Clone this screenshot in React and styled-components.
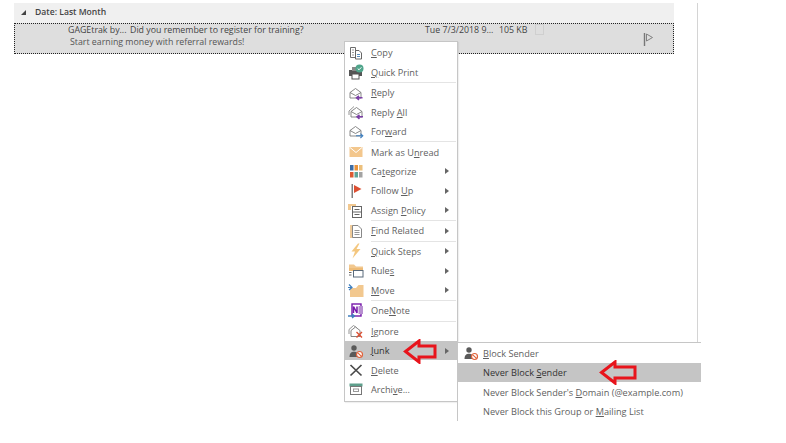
import React from "react";
import styled, { createGlobalStyle } from "styled-components";

const GlobalStyle = createGlobalStyle`
  html, body {
    margin: 0;
    padding: 0;
    background: #fff;
  }
  body {
    font-family: "Open Sans", "Noto Sans", "Liberation Sans", sans-serif;
  }
`;

const Page = styled.div`
  position: relative;
  width: 786px;
  height: 443px;
  overflow: hidden;
  background: #fff;
  display: flex;
  align-items: flex-start;
  padding: 3px 0 0 14px;
  box-sizing: border-box;
`;

const MailList = styled.div`
  width: 660px;
  flex: none;
`;

const ReadingDivider = styled.div`
  width: 1px;
  height: 339px;
  margin-left: 23px;
  background: #d4d4d4;
  flex: none;
`;

const GroupHeader = styled.div`
  height: 20px;
  box-sizing: border-box;
  background: #f0f0f0;
  display: flex;
  align-items: center;
  padding: 0 0 2px 7px;
  gap: 9px;
  font-size: 8.6px;
  font-weight: 600;
  color: #444;
`;

const Collapse = styled.span`
  width: 0;
  height: 0;
  border-style: solid;
  border-width: 0 0 5px 5px;
  border-color: transparent transparent #444 transparent;
`;

const MailRow = styled.div`
  height: 31px;
  box-sizing: border-box;
  background: #dedede;
  border: 1px dotted #222;
  display: flex;
  padding-left: 53px;
  font-size: 8.8px;
  color: #444;
`;

const MailText = styled.div`
  width: 576px;
  flex: none;
  display: flex;
  flex-direction: column;
  margin-top: -1px;
`;

const MailLine = styled.div`
  display: flex;
  align-items: center;
  height: 13px;
  white-space: nowrap;
`;

const Preview = styled.div`
  height: 12px;
  line-height: 12px;
  margin-left: 2px;
  white-space: nowrap;
  color: #555;
`;

const Cell = styled.span`
  width: ${(p) => p.$w}px;
  flex: none;
`;

const ReadBox = styled.span`
  width: 7px;
  height: 9px;
  border: 1px solid #cfcfcf;
  flex: none;
`;

const FlagSlot = styled.div`
  margin: 9px 0 0 -1px;
`;

const Menu = styled.div`
  position: absolute;
  left: 344px;
  top: 41px;
  width: 114px;
  height: 361px;
  box-sizing: border-box;
  background: #fff;
  border: 1px solid #c6c6c6;
  box-shadow: 1px 1px 1px rgba(0, 0, 0, 0.06);
  padding-top: 1px;
  font-size: 9.2px;
  color: #5f5f5f;
`;

const SubMenu = styled.div`
  position: absolute;
  left: 457px;
  top: 342px;
  width: 244px;
  height: 79px;
  box-sizing: border-box;
  background: #fff;
  border-top: 1px solid #c6c6c6;
  border-left: 1px solid #c6c6c6;
  padding-top: 0.6px;
  font-size: 9.2px;
  color: #5f5f5f;
`;

const Item = styled.div`
  position: relative;
  height: 19.4px;
  display: flex;
  align-items: center;
  white-space: nowrap;
  background: ${(p) => (p.$active ? "#c5c5c5" : "transparent")};
  color: ${(p) => (p.$active ? "#333" : "inherit")};
`;

const IconSlot = styled.span`
  width: 26px;
  height: 16px;
  flex: none;
  display: flex;
  justify-content: center;
  padding-right: 5px;
  box-sizing: border-box;
`;

const Label = styled.span`
  flex: 1;
`;

const Access = styled.span`
  text-decoration: underline;
  text-underline-offset: 1px;
`;

const SubArrow = styled.span`
  width: 0;
  height: 0;
  margin-right: 8px;
  border-style: solid;
  border-width: 3px 0 3px 4px;
  border-color: transparent transparent transparent #666;
`;

const Separator = styled.div`
  height: 1px;
  margin: 0.1px 1px 0.1px 26px;
  background: #e4e4e4;
`;

const SubSlot = styled.span`
  width: 25px;
  height: 16px;
  flex: none;
  display: flex;
  justify-content: center;
`;

const Pointer = styled.svg`
  position: absolute;
  left: ${(p) => p.$left}px;
  top: ${(p) => p.$top}px;
  display: block;
`;

const Ico = ({ children }) => (
  <svg width="16" height="16" viewBox="0 0 16 16" fill="none">
    {children}
  </svg>
);

const Envelope = ({ x = 0 }) => (
  <g stroke="#7a7a7a" strokeWidth="0.9">
    <path d={`M${2 + x} 7.5 L${7.5 + x} 3.5 L${13 + x} 7.5 V13 H${2 + x} Z`} fill="#fff" />
    <path d={`M${2 + x} 7.5 L${7.5 + x} 10.5 L${13 + x} 7.5`} />
  </g>
);

const NoSign = () => (
  <g>
    <circle cx="11.5" cy="11.5" r="3" fill="#fff" stroke="#e0623a" strokeWidth="1.2" />
    <path d="M9.5 9.7 L13.5 13.3" stroke="#e0623a" strokeWidth="1.1" />
  </g>
);

const PersonIcon = () => (
  <Ico>
    <circle cx="6" cy="5" r="2.7" fill="#5a5a5a" />
    <path d="M1.5 14 C1.5 10 3.5 8.7 6 8.7 C8.5 8.7 10.5 10 10.5 14 Z" fill="#5a5a5a" />
    <NoSign />
  </Ico>
);

const icons = {
  copy: (
    <Ico>
      <path d="M2.5 2.5 H7.5 V12.5 H2.5 Z" stroke="#6e6e6e" fill="#fff" />
      <path d="M7.5 5.5 H11 L13.5 8 V14 H7.5 Z" stroke="#666" fill="#fff" />
      <path d="M4 5 H6 M4 7.5 H6 M4 10 H6" stroke="#999" />
      <path d="M9 9.5 H12 M9 11.5 H12" stroke="#5a8fbe" />
    </Ico>
  ),
  print: (
    <Ico>
      <rect x="1" y="6" width="13" height="6" fill="#555" />
      <rect x="4" y="3" width="6" height="4" fill="#888" />
      <rect x="4" y="10" width="7" height="5" fill="#fff" stroke="#555" />
      <circle cx="11.5" cy="4.5" r="4" fill="#4fa58b" />
      <path d="M9.7 4.5 L11 5.8 L13.4 3.3" stroke="#fff" strokeWidth="1" />
    </Ico>
  ),
  reply: (
    <Ico>
      <Envelope />
      <path d="M14.5 12.8 H9 M11 10.8 L8.6 12.8 L11 14.8" stroke="#7b3fa6" strokeWidth="1.6" />
    </Ico>
  ),
  replyAll: (
    <Ico>
      <path d="M1 7 L6 2.5 M1 7 V11" stroke="#888" strokeWidth="0.9" />
      <Envelope x={1} />
      <path d="M15 12.8 H9.5 M11.5 10.8 L9.1 12.8 L11.5 14.8" stroke="#7b3fa6" strokeWidth="1.6" />
    </Ico>
  ),
  forward: (
    <Ico>
      <Envelope />
      <path d="M8 12.8 H14.5 M12.4 10.6 L14.8 12.8 L12.4 15" stroke="#3f7fbf" strokeWidth="1.1" />
    </Ico>
  ),
  unread: (
    <Ico>
      <rect x="1.5" y="3" width="13" height="10" fill="#f3c78d" />
      <path d="M2 3.5 L8 8.5 L14 3.5" stroke="#fff" strokeWidth="1" />
    </Ico>
  ),
  categorize: (
    <Ico>
      <rect x="2" y="2" width="3.5" height="5.5" fill="#3c6da6" />
      <rect x="6.5" y="2" width="3.5" height="5.5" fill="#e8923a" />
      <rect x="11" y="2" width="3.5" height="5.5" fill="#ecc07c" />
      <rect x="2" y="9" width="3.5" height="5.5" fill="#dc5a32" />
      <rect x="6.5" y="9" width="3.5" height="5.5" fill="#5fa597" />
      <rect x="11" y="9" width="3.5" height="5.5" fill="#a3a3a3" />
    </Ico>
  ),
  follow: (
    <Ico>
      <rect x="3.5" y="1" width="1.5" height="14" fill="#808080" />
      <path d="M6 2 L13.5 6 L6 10 Z" fill="#dc4f32" />
    </Ico>
  ),
  policy: (
    <Ico>
      <path d="M0 2 H8 V4 H3 V8 H0 Z" fill="#f2c88f" />
      <rect x="4.5" y="4.5" width="9" height="11" fill="#fff" stroke="#666" />
      <path d="M6.5 7.5 H11.5 M4.5 10 H13.5 M6.5 12.5 H11.5" stroke="#666" />
    </Ico>
  ),
  find: (
    <Ico>
      <path d="M2 2 H8 V15 H2 Z" fill="#efcb9a" />
      <path d="M4.5 2.5 H10 L13.5 6 V14.5 H4.5 Z" fill="#fff" stroke="#888" />
      <path d="M6.5 7.5 H11.5 M6.5 9.5 H11.5 M6.5 11.5 H11.5" stroke="#999" />
    </Ico>
  ),
  steps: (
    <Ico>
      <path d="M10 0.5 L3.5 8.5 H7 L4.5 15.5 L12.5 6 H8.5 L11.5 0.5 Z" fill="#f4c77f" />
    </Ico>
  ),
  rules: (
    <Ico>
      <path d="M1 1.5 H6 L8 3.5 H15 V8 H1 Z" fill="#f2c88f" />
      <path d="M1 5 H15 V8 H1 Z" fill="#eebb76" />
      <rect x="5.5" y="7.5" width="9.5" height="6.5" fill="#fff" stroke="#5a6a7a" />
      <path d="M1 9.5 H3.5 M1 12 H3.5" stroke="#666" />
    </Ico>
  ),
  move: (
    <Ico>
      <path d="M2 15 V6 H8 L10.5 3 H15.5 V15 Z" fill="#f2c88f" />
      <path d="M1 2.5 L4 5.5 L1 8 M0 5.5 H4" stroke="#3f7fbf" strokeWidth="1.2" />
    </Ico>
  ),
  onenote: (
    <Ico>
      <rect x="4" y="1" width="9" height="12" fill="#fff" stroke="#7719aa" strokeWidth="1.4" />
      <rect x="10.5" y="3" width="4.5" height="8" fill="#b78fd0" />
      <path d="M5.5 10 V3.5 L9 10 V3.5" stroke="#7719aa" strokeWidth="1.5" />
      <path d="M0 13 H6 M4 11 L6.5 13 L4 15" stroke="#3f7fbf" strokeWidth="1.3" />
    </Ico>
  ),
  ignore: (
    <Ico>
      <path d="M1 6.5 L5.5 2.5 L9 5 M1 6.5 V11" stroke="#888" strokeWidth="0.9" />
      <path d="M3 7.5 L7.5 4 L12 7.5 V13.5 H3 Z" stroke="#777" strokeWidth="0.9" fill="#fff" />
      <path d="M8.5 9 L14 14.5 M14 9 L8.5 14.5" stroke="#dc4f32" strokeWidth="1.4" />
    </Ico>
  ),
  junk: <PersonIcon />,
  remove: (
    <Ico>
      <path d="M2.5 3 L13.5 13.5 M13.5 3 L2.5 13.5" stroke="#4a4a4a" strokeWidth="1.7" />
    </Ico>
  ),
  archive: (
    <Ico>
      <rect x="1.5" y="2.5" width="13" height="3" fill="#5e9f8c" />
      <rect x="2.5" y="5.5" width="11" height="8" fill="#fff" stroke="#777" />
      <rect x="5.5" y="8" width="5" height="2.5" fill="#fff" stroke="#999" />
    </Ico>
  ),
};

const menu = [
  { icon: "copy", label: [["C"], "opy"] },
  { icon: "print", label: [["Q"], "uick Print"] },
  "sep",
  { icon: "reply", label: [["R"], "eply"] },
  { icon: "replyAll", label: ["Reply ", ["A"], "ll"] },
  { icon: "forward", label: ["For", ["w"], "ard"] },
  "sep",
  { icon: "unread", label: ["Mark as U", ["n"], "read"] },
  { icon: "categorize", label: ["Ca", ["t"], "egorize"], more: true },
  { icon: "follow", label: ["Follow ", ["U"], "p"], more: true },
  { icon: "policy", label: ["Assign ", ["P"], "olicy"], more: true },
  "sep",
  { icon: "find", label: [["F"], "ind Related"], more: true },
  "sep",
  { icon: "steps", label: [["Q"], "uick Steps"], more: true },
  { icon: "rules", label: ["Rule", ["s"]], more: true },
  { icon: "move", label: [["M"], "ove"], more: true },
  "sep",
  { icon: "onenote", label: ["One", ["N"], "ote"] },
  "sep",
  { icon: "ignore", label: [["I"], "gnore"] },
  { icon: "junk", label: [["J"], "unk"], more: true, active: true, pointer: { left: 58, top: -2, length: 32 } },
  { icon: "remove", label: [["D"], "elete"] },
  { icon: "archive", label: ["Archi", ["v"], "e..."] },
];

const renderLabel = (parts) =>
  parts.map((part, i) =>
    Array.isArray(part) ? <Access key={i}>{part[0]}</Access> : <span key={i}>{part}</span>
  );

const RedArrow = ({ left, top, length }) => (
  <Pointer $left={left} $top={top} width={length + 2} height={25} viewBox={`0 0 ${length + 2} 25`}>
    <path
      d={`M2.5 12.5 L16 2 V7 H${length} V18 H16 V23 Z`}
      fill="none"
      stroke="#e8141c"
      strokeWidth="3"
    />
  </Pointer>
);

const Flag = () => (
  <svg width="12" height="14" viewBox="0 0 12 14" fill="none">
    <path d="M1.5 0 V13" stroke="#777" strokeWidth="1.4" />
    <path d="M3.5 1 L9.5 4.5 L3.5 8 Z" stroke="#777" strokeWidth="0.9" />
  </svg>
);

export default function App() {
  return (
    <Page>
      <GlobalStyle />
      <MailList>
        <GroupHeader>
          <Collapse />
          <span>Date: Last Month</span>
        </GroupHeader>
        <MailRow>
          <MailText>
            <MailLine>
              <Cell $w={62}>GAGEtrak by...</Cell>
              <Cell $w={295}>Did you remember to register for training?</Cell>
              <Cell $w={74}>Tue 7/3/2018 9...</Cell>
              <Cell $w={36}>105 KB</Cell>
              <ReadBox />
            </MailLine>
            <Preview>Start earning money with referral rewards!</Preview>
          </MailText>
          <FlagSlot>
            <Flag />
          </FlagSlot>
        </MailRow>
      </MailList>
      <ReadingDivider />

      <Menu>
        {menu.map((entry, i) =>
          entry === "sep" ? (
            <Separator key={i} />
          ) : (
            <Item key={i} $active={entry.active}>
              <IconSlot>{icons[entry.icon]}</IconSlot>
              <Label>{renderLabel(entry.label)}</Label>
              {entry.more && <SubArrow />}
              {entry.pointer && <RedArrow {...entry.pointer} />}
            </Item>
          )
        )}
      </Menu>

      <SubMenu>
        <Item>
          <SubSlot>
            <PersonIcon />
          </SubSlot>
          <Label>
            <Access>B</Access>lock Sender
          </Label>
        </Item>
        <Item $active>
          <SubSlot />
          <Label>
            Never Block <Access>S</Access>ender
          </Label>
          <RedArrow left={141} top={-3} length={36} />
        </Item>
        <Item>
          <SubSlot />
          <Label>
            Never Block Sender's <Access>D</Access>omain (@example.com)
          </Label>
        </Item>
        <Item>
          <SubSlot />
          <Label>
            Never Block this Group or <Access>M</Access>ailing List
          </Label>
        </Item>
      </SubMenu>
    </Page>
  );
}
